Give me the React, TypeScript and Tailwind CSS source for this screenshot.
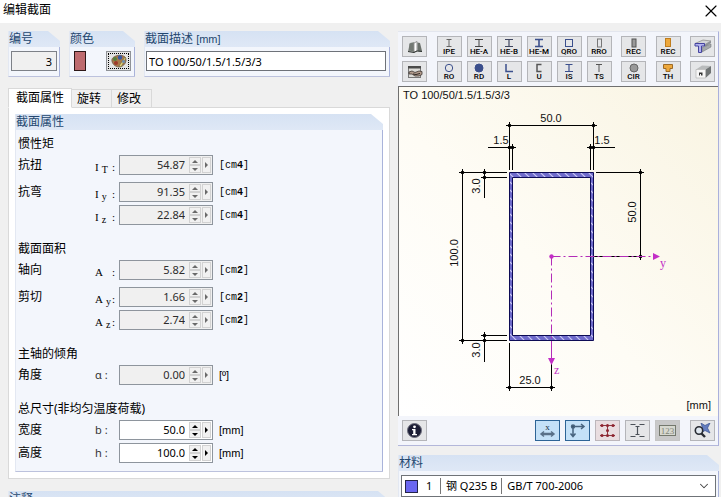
import { useState } from "react";
import type { ReactNode } from "react";
import { ChevronDown, X } from "lucide-react";
import clsx from "clsx";

const NAVY = "#3b4f8c";

function Group({ title, children, className }: { title: ReactNode; children?: ReactNode; className?: string }) {
  return (
    <section className={clsx("flex flex-col border-b border-l border-b-[#bcc2dd] border-l-[#e3e8f2]", className)}>
      <h2 className="h-4 bg-linear-to-b from-[#d6e2f3] to-[#dfe8f6] text-[12px] leading-4 text-[#24476f] [clip-path:polygon(0_0,calc(100%-12px)_0,100%_10px,100%_100%,0_100%)]">
        {title}
      </h2>
      <div className="flex-1 border-r border-[#a9b3da] bg-[#f3f6fc]">{children}</div>
    </section>
  );
}

type NumberFieldProps = { id: string; value: string; editable?: boolean };

function NumberField({ id, value, editable }: NumberFieldProps) {
  const [text, setText] = useState(value);
  const digits = value.split(".")[1].length;
  const step = (delta: number) => setText((Number(text) + delta).toFixed(digits));
  const ink = editable ? "#000000" : "#6a6a6a";
  const button = "flex items-center justify-center border border-[#d2d2d2] bg-[#f1f1f1]";

  return (
    <div className={clsx("flex h-5 w-[94px] items-center border border-[#8e959d] pr-px", editable ? "bg-white" : "bg-[#f0f0f0]")}>
      <input
        id={id}
        value={text}
        readOnly={!editable}
        onChange={(e) => setText(e.target.value)}
        className={clsx("min-w-0 flex-1 bg-transparent pr-1 text-right text-[11px] outline-none", editable ? "text-black" : "text-[#2c2c2c]")}
      />
      <div className="flex h-4 w-3 flex-col">
        <button aria-label="增加" disabled={!editable} onClick={() => step(1)} className={clsx(button, "flex-1")}>
          <svg width="6" height="3" viewBox="0 0 6 3"><path d="M0 3 3 0 6 3z" fill={ink} /></svg>
        </button>
        <button aria-label="减少" disabled={!editable} onClick={() => step(-1)} className={clsx(button, "flex-1")}>
          <svg width="6" height="3" viewBox="0 0 6 3"><path d="M0 0 3 3 6 0z" fill={ink} /></svg>
        </button>
      </div>
      <button aria-label="更多" disabled={!editable} className={clsx(button, "ml-px h-4 w-[9px]")}>
        <svg width="3" height="6" viewBox="0 0 3 6"><path d="M0 0 3 3 0 6z" fill={ink} /></svg>
      </button>
    </div>
  );
}

type Row = { label?: string; symbol: string; sub?: string; value: string; unit: string; power?: string; editable?: boolean };

const sections: { title: string; rows: Row[] }[] = [
  {
    title: "惯性矩",
    rows: [
      { label: "抗扭", symbol: "I", sub: "T", value: "54.87", unit: "cm", power: "4" },
      { label: "抗弯", symbol: "I", sub: "y", value: "91.35", unit: "cm", power: "4" },
      { symbol: "I", sub: "z", value: "22.84", unit: "cm", power: "4" },
    ],
  },
  {
    title: "截面面积",
    rows: [
      { label: "轴向", symbol: "A", value: "5.82", unit: "cm", power: "2" },
      { label: "剪切", symbol: "A", sub: "y", value: "1.66", unit: "cm", power: "2" },
      { symbol: "A", sub: "z", value: "2.74", unit: "cm", power: "2" },
    ],
  },
  { title: "主轴的倾角", rows: [{ label: "角度", symbol: "α", value: "0.00", unit: "º" }] },
  {
    title: "总尺寸(非均匀温度荷载)",
    rows: [
      { label: "宽度", symbol: "b", value: "50.0", unit: "mm", editable: true },
      { label: "高度", symbol: "h", value: "100.0", unit: "mm", editable: true },
    ],
  },
];

function PropertyRow({ row, tight }: { row: Row; tight: boolean }) {
  const id = `field-${row.symbol}${row.sub ?? ""}`;
  return (
    <div className={clsx("flex h-5 items-center", tight ? "mt-[3px]" : "mt-[7px] first-of-type:mt-px")}>
      <label htmlFor={id} className="flex w-[101px] items-center">
        <span className="w-[77px] text-[12px]">{row.label}</span>
        {row.power ? (
          <span className="flex flex-1 justify-between pt-1 pr-1 font-['Liberation_Serif',serif] text-[11px]">
            <span>
              {row.symbol}
              {row.sub && <sub className="pl-[3px] text-[10px]">{row.sub}</sub>}
            </span>
            <span>:</span>
          </span>
        ) : (
          <span className="text-[11px] text-[#333]">{row.symbol} :</span>
        )}
      </label>
      <NumberField id={id} value={row.value} editable={row.editable} />
      {row.power ? (
        <span className="pl-1.5 font-['Liberation_Mono',monospace] text-[10px]">
          [{row.unit}
          <b>{row.power}</b>]
        </span>
      ) : (
        <span className="pl-1.5 font-['Liberation_Sans',sans-serif] text-[11px]">[{row.unit}]</span>
      )}
    </div>
  );
}

function ToolButton({ label, name, tone = "plain", children }: { label?: string; name?: string; tone?: "plain" | "active" | "red" | "muted"; children: ReactNode }) {
  return (
    <button
      aria-label={label ?? name}
      className={clsx(
        "flex h-[21px] w-[25px] flex-col items-center justify-center border",
        tone === "plain" && "border-[#b4b5b9] bg-[#e5e6e8]",
        tone === "active" && "border-[#2d6496] bg-[#c4e1f8]",
        tone === "red" && "border-[#bcb6bb] bg-[#e9dde0]",
        tone === "muted" && "border-[#c5c5c5] bg-[#c9c9c9]",
      )}
    >
      {children}
      {label && <span className="font-['Roboto',sans-serif] text-[8px] leading-[8px] font-medium text-black">{label}</span>}
    </button>
  );
}

function Shape({ children }: { children: ReactNode }) {
  return (
    <svg width="16" height="10" viewBox="0 0 16 10" fill="none" stroke={NAVY} strokeWidth="1">
      {children}
    </svg>
  );
}

const profilesTop = [
  { label: "IPE", shape: <path d="M5.5 1.5h5M8 1.5v7M5.5 8.5h5" stroke="#666" /> },
  { label: "HE-A", shape: <path d="M4 1.5h8M8 1.5v7M4 8.5h8" stroke="#444" /> },
  { label: "HE-B", shape: <path d="M4 1.5h8M8 1.5v7M4 8.5h8" stroke="#3f4660" strokeWidth="1.2" /> },
  { label: "HE-M", shape: <path d="M4 1.5h8M8 1.5v7M4 8.5h8" strokeWidth="1.6" /> },
  { label: "QRO", shape: <rect x="4.5" y="1.5" width="7" height="7" /> },
  { label: "RRO", shape: <rect x="6.5" y="1" width="4" height="8" stroke="#777" /> },
];

const profilesBottom = [
  { label: "RO", shape: <circle cx="8" cy="5" r="3.7" /> },
  { label: "RD", shape: <circle cx="8" cy="5" r="4" fill={NAVY} /> },
  { label: "L", shape: <path d="M5 1v7.5h7" strokeWidth="1.5" /> },
  { label: "U", shape: <path d="M10.5 1.5H6v7h4.5" stroke="#555" strokeWidth="1.5" /> },
  { label: "IS", shape: <path d="M4.5 1.5h7M8 1.5v7M4 8.5h8" strokeWidth="1.2" /> },
  { label: "TS", shape: <path d="M5 1.5h6M8 1.5V9" stroke="#555" /> },
];

function ProfileToolbar() {
  return (
    <div className="flex justify-between py-1 pr-[3px] pl-1">
      <div className="flex flex-col gap-1">
        <ToolButton name="截面库">
          <svg width="16" height="14" viewBox="0 0 16 14">
            <path d="M1 11 3 3l4-1v10l-4-.5z" fill="#8a908b" />
            <path d="M3 3.500v7M5 3v8" stroke="#5c625d" />
            <path d="M7 12V3l3-1.500V11z" fill="#fff" stroke="#6b6b6b" strokeWidth=".7" />
            <path d="M10.500 2.500 13 3l2 8-2 .5-2.500-.5z" fill="#6a706b" />
            <path d="m1 11.500 6 1 3-1.500 5 .5" stroke="#2d322f" fill="none" />
          </svg>
        </ToolButton>
        <ToolButton name="选择截面">
          <svg width="16" height="14" viewBox="0 0 16 14">
            <rect x="1.5" y="1.5" width="12" height="11" fill="#dcdbd7" stroke="#777" />
            <path d="M1 1h13v2.500H1z" fill="#4a4a4a" />
            <path d="m2 7 3-1 3 1.500L12 6l3 .5v3l-3 1.500-4 0-3-2H2z" fill="#b39c8d" stroke="#3c3632" strokeWidth=".8" />
            <path d="m6 9 3 .5 4-1" stroke="#2a2522" fill="none" />
          </svg>
        </ToolButton>
      </div>
      <div className="flex flex-col gap-1">
        {[profilesTop, profilesBottom].map((line, i) => (
          <div key={i} className="flex gap-[5px]">
            {line.map((p) => (
              <ToolButton key={p.label} label={p.label}>
                <Shape>{p.shape}</Shape>
              </ToolButton>
            ))}
          </div>
        ))}
      </div>
      <div className="flex flex-col gap-1">
        <ToolButton label="REC">
          <Shape><rect x="6" y="1" width="4" height="8" fill="#999" stroke="#555" /></Shape>
        </ToolButton>
        <ToolButton label="CIR">
          <Shape><circle cx="8" cy="5" r="4" fill="#999" stroke="#666" /></Shape>
        </ToolButton>
      </div>
      <div className="flex flex-col gap-1">
        <ToolButton label="REC">
          <Shape><rect x="5.5" y=".5" width="5" height="8" fill="#eda83c" stroke="#c07d1d" /></Shape>
        </ToolButton>
        <ToolButton label="TH">
          <Shape><path d="M3.500 1.500h9v4H10v3H6v-3H3.500z" fill="#eda83c" stroke="#9d6a25" /></Shape>
        </ToolButton>
      </div>
      <div className="flex flex-col gap-1">
        <ToolButton name="组合截面">
          <svg width="18" height="15" viewBox="0 0 18 15">
            <path d="M1 4.500 9 1l8 1-6 3.500z" fill="#d3d5d7" stroke="#777" strokeWidth=".6" />
            <path d="m11 5.500 6-3.500v2l-6 4z" fill="#8c9197" />
            <path d="m8 8.500 9-3.500v3l-9 5z" fill="#a4a8ac" stroke="#6b6f73" strokeWidth=".5" />
            <path d="M1 4.500h9.500v2.500H7.500v6.500H4.500V7H1z" fill="#b3b3ee" stroke="#4544a0" />
          </svg>
        </ToolButton>
        <ToolButton name="自定义截面">
          <svg width="18" height="15" viewBox="0 0 18 15">
            <path d="m2 5.500 6-4 9 .5-5.500 3.500z" fill="#b9bbbc" />
            <path d="M11.500 5.500 17 2v7l-5.500 5z" fill="#707475" />
            <path d="M2 5.500h9.500V14H2z" fill="#f6f6f6" stroke="#b5b5b5" strokeWidth=".7" />
            <path d="M5 8.500h3.500v3H7V10H6v1.500H5z" fill="#333" />
          </svg>
        </ToolButton>
      </div>
    </div>
  );
}

// Dimension line end: small dot with a cross through it
function Tick({ x, y }: { x: number; y: number }) {
  return (
    <g>
      <path d={`M${x - 3.5} ${y}h7M${x} ${y - 3.5}v7`} />
      <circle cx={x} cy={y} r="1.8" fill="#000" stroke="none" />
    </g>
  );
}

const ticks = [
  [110.5, 38.5], [194.5, 38.5],
  [110.5, 60.5], [113.5, 60.5], [191.5, 60.5], [194.5, 60.5],
  [63.5, 85.5], [85.5, 85.5], [85.5, 90.5],
  [63.5, 253.5], [85.5, 248.5], [85.5, 253.5],
  [110.5, 300.5], [152.5, 300.5],
  [241.5, 85.5], [241.5, 169.5],
];

function SectionDrawing() {
  return (
    <svg viewBox="0 0 319 329" className="block w-full font-['Liberation_Sans',sans-serif] text-[11px]" role="img" aria-label="截面图">
      <defs>
        <linearGradient id="paper" x1="0" y1="1" x2="1" y2="0">
          <stop offset="0" stopColor="#ffffff" />
          <stop offset="0.45" stopColor="#fefcf5" />
          <stop offset="1" stopColor="#f9f4e2" />
        </linearGradient>
        <pattern id="hatch" width="8" height="8" patternUnits="userSpaceOnUse">
          <rect width="8" height="8" fill="#6f6bcb" />
          <path d="m-1-1 10 10M-1 7l2 2M7-1l2 2" stroke="#c9c8f4" strokeWidth="1.2" />
        </pattern>
      </defs>
      <rect width="319" height="329" fill="url(#paper)" />

      <path d="M110.500 85.500h84v168h-84zM113.500 90.500v158h78v-158z" fill="url(#hatch)" fillRule="evenodd" stroke="#0d0b55" />

      <g stroke="#000" fill="none">
        <path d="M110.500 38.500h84M110.500 38v45M194.500 38v45M113.500 60v23M191.500 60v23" />
        <path d="M89 60.500h26M190 60.500h26" />
        <path d="M60 85.500h48M82 90.500h26M63.500 83v173M85.500 82v29" />
        <path d="M60 253.500h48M82 248.500h26M85.500 246v29" />
        <path d="M110.500 256v47M152.500 256v47M110.500 300.500h42" />
        <path d="M197 85.500h47M195 169.500h49M241.500 83v89" />
        {ticks.map(([x, y]) => (
          <Tick key={`${x}-${y}`} x={x} y={y} />
        ))}
      </g>

      <g stroke="#b32db8" fill="none">
        <path d="M152.500 169.500H255" strokeDasharray="9 3 2 3" />
        <path d="M152.500 169.500V254" strokeDasharray="9 3 2 3" />
        <path d="M152.500 254v18" />
      </g>
      <g fill="#c32fc6">
        <circle cx="152.500" cy="169.500" r="2.2" />
        <path d="M254 166l7 3.500-7 3.500zM149 271h7l-3.500 7z" />
        <g className="font-['Liberation_Serif',serif] text-[12px]">
          <text x="261" y="180">y</text>
          <text x="155" y="287">z</text>
        </g>
      </g>

      <g fill="#111">
        <text x="4" y="12">TO 100/50/1.5/1.5/3/3</text>
        <text x="312" y="322" textAnchor="end">[mm]</text>
        <g textAnchor="middle">
          <text x="152" y="35">50.0</text>
          <text x="102" y="57">1.5</text>
          <text x="203" y="57">1.5</text>
          <text x="131" y="297">25.0</text>
          <text transform="translate(81 99) rotate(-90)">3.0</text>
          <text transform="translate(59 166) rotate(-90)">100.0</text>
          <text transform="translate(81 263) rotate(-90)">3.0</text>
          <text transform="translate(237 125) rotate(-90)">50.0</text>
        </g>
      </g>
    </svg>
  );
}

function ViewToolbar() {
  return (
    <div className="flex justify-between py-1 pr-[3px] pl-1">
      <ToolButton name="信息">
        <svg width="15" height="15" viewBox="0 0 15 15">
          <circle cx="7.500" cy="7.500" r="7" fill="#1b1d35" stroke="#6d6e7c" />
          <circle cx="7.500" cy="3.800" r="1.400" fill="#fff" />
          <path d="M5 6h3.500v5H10v1.300H5V11h1.200V7.300H5z" fill="#fff" />
        </svg>
      </ToolButton>
      <div className="flex gap-2.5">
        <div className="flex gap-[5px]">
          <ToolButton name="尺寸" tone="active">
            <svg width="17" height="15" viewBox="0 0 17 15" fill="none" stroke="#5a7189">
              <text x="8.500" y="7" fontSize="9" textAnchor="middle" fill="#1c2f45" stroke="none" className="font-['Liberation_Serif',serif]">x</text>
              <path d="M3 11h11" strokeWidth="2.500" />
              <path d="m5 8.500-3 2.500 3 2.500M12 8.500l3 2.500-3 2.500" strokeWidth="1.500" />
            </svg>
          </ToolButton>
          <ToolButton name="坐标轴" tone="active">
            <svg width="17" height="15" viewBox="0 0 17 15" fill="none" stroke="#47637e" strokeWidth="1.500">
              <path d="M4 13V3.500h11M1.500 10.500 4 13.500l2.500-3M12 1l3 2.500L12 6" />
              <circle cx="4" cy="3.500" r="1.500" fill="#344e67" />
            </svg>
          </ToolButton>
          <ToolButton name="应力点" tone="red">
            <svg width="17" height="15" viewBox="0 0 17 15" fill="none" stroke="#8d3840">
              <path d="M1 2.500h15M1 12.500h15M8.500 2.500v10" />
              <g fill="#8f2430" stroke="none">
                <circle cx="3" cy="2.500" r="1.500" /><circle cx="8.500" cy="2.500" r="1.500" /><circle cx="14" cy="2.500" r="1.500" />
                <circle cx="8.500" cy="7.500" r="1.500" />
                <circle cx="3" cy="12.500" r="1.500" /><circle cx="8.500" cy="12.500" r="1.500" /><circle cx="14" cy="12.500" r="1.500" />
              </g>
            </svg>
          </ToolButton>
          <ToolButton name="截面部分">
            <svg width="17" height="15" viewBox="0 0 17 15" fill="none" stroke="#4b5158" strokeWidth="1.200">
              <path d="M1.500 1.500h5M10.500 1.500h5M1.500 13.500h5M10.500 13.500h5M8.500 3.500v8M6.500 3.500h4M6.500 11.500h4" />
            </svg>
          </ToolButton>
          <ToolButton name="编号" tone="muted">
            <svg width="17" height="11" viewBox="0 0 17 11">
              <rect x=".5" y=".5" width="16" height="10" fill="#d7d8cf" stroke="#74786d" />
              <text x="8.500" y="9" fontSize="9" textAnchor="middle" fill="#80847a" className="font-['Liberation_Serif',serif]">123</text>
            </svg>
          </ToolButton>
        </div>
        <ToolButton name="显示全部">
          <svg width="17" height="15" viewBox="0 0 17 15" fill="none">
            <path d="m7 0 4 2.500L16 0l-2.500 5 2.500 5-5-2.500L7 10l1.500-5z" fill="#647ec0" stroke="#35508f" strokeWidth=".7" />
            <circle cx="5" cy="7.500" r="3.700" stroke="#272b32" strokeWidth="1.600" fill="#dfe7ef" />
            <path d="m7.500 10.500 3.500 3.500" stroke="#272b32" strokeWidth="2.400" />
          </svg>
        </ToolButton>
      </div>
    </div>
  );
}

const tabs = ["截面属性", "旋转", "修改"];

export default function App() {
  const [tab, setTab] = useState(tabs[0]);
  const [description, setDescription] = useState("TO 100/50/1.5/1.5/3/3");

  return (
    <div className="flex h-screen flex-col overflow-hidden bg-[#f0f0f0] font-['Noto_Sans','Noto_Sans_CJK_SC',sans-serif] text-[12px] text-black">
      <header className="flex h-[23px] shrink-0 items-center justify-between bg-white pl-[3px]">
        <h1 className="pb-1 leading-4">编辑截面</h1>
        <button aria-label="关闭" className="pb-0.5">
          <X size={20} strokeWidth={1.4} />
        </button>
      </header>

      <main className="grid grid-cols-[382fr_321fr] gap-2 pt-2 pr-0.5 pl-2">
        <div className="min-w-0">
          <div className="flex h-[46px] gap-[9px]">
            <Group title={<label htmlFor="number">编号</label>} className="w-[52px]">
              <div className="px-0.5 pt-1">
                <input id="number" readOnly value="3" className="h-5 w-full border border-[#7d8188] bg-[#f0f0f0] pr-1 text-right text-[11px]" />
              </div>
            </Group>
            <Group title="颜色" className="w-[66px]">
              <div className="flex justify-between pt-1 pr-[3px] pl-1">
                <span className="h-5 w-3 border border-[#2c1717] bg-[#bd6a6e]" />
                <button aria-label="选择颜色" className="flex h-5 w-[25px] border border-[#8f9297] bg-[#e4e4e4] p-px">
                  <span className="flex flex-1 items-center justify-center border border-dotted border-black">
                    <svg width="16" height="14" viewBox="0 0 16 14">
                      <path d="M1 5c2-4 10-5 13-2 3 4-1 10-6 10C4 13 0 9 1 5z" fill="#a8794b" stroke="#665544" strokeWidth=".7" />
                      <circle cx="4" cy="5" r="2" fill="#54803e" />
                      <circle cx="9" cy="3.500" r="2.200" fill="#3757a0" />
                      <circle cx="5" cy="9" r="2" fill="#9e3a2b" />
                      <path d="m8 12 6-9 1 1-5 9z" fill="#e5d477" stroke="#5b5a3d" strokeWidth=".5" />
                      <circle cx="12.500" cy="7.500" r="1.500" fill="#6d8caf" />
                    </svg>
                  </span>
                </button>
              </div>
            </Group>
            <Group
              title={
                <label htmlFor="description">
                  截面描述 <span className="font-['Liberation_Sans',sans-serif] text-[11px]">[mm]</span>
                </label>
              }
              className="min-w-0 flex-1"
            >
              <div className="px-[3px] pt-1 pl-px">
                <input
                  id="description"
                  value={description}
                  onChange={(e) => setDescription(e.target.value)}
                  className="h-5 w-full border border-[#6e7279] bg-white px-0.5 text-[11px]"
                />
              </div>
            </Group>
          </div>

          <div role="tablist" className="mt-2.5 flex h-5 items-end">
            {tabs.map((name) => (
              <button
                key={name}
                role="tab"
                aria-selected={tab === name}
                onClick={() => setTab(name)}
                className={clsx(
                  "border border-[#d9d9d9]",
                  tab === name ? "-mb-px h-5 border-b-white bg-white px-[7px]" : "h-[18px] border-b-0 border-l-0 bg-[#f0f0f0] pr-[10px] pl-[5px]",
                )}
              >
                {name}
              </button>
            ))}
          </div>

          <div role="tabpanel" className="border border-[#d9d9d9] bg-white p-1.5">
            <Group title="截面属性">
              <div className="px-0.5 pt-1 pb-2">
                {sections.map((section) => (
                  <section key={section.title} className="mb-3.5 last:mb-0">
                    <h3 className="h-5 leading-5">{section.title}</h3>
                    {section.rows.map((row) => (
                      <PropertyRow key={`${row.symbol}${row.sub}`} row={row} tight={!row.label || row.symbol === "h"} />
                    ))}
                  </section>
                ))}
              </div>
            </Group>
          </div>

          <Group title={<label htmlFor="comment">注释</label>} className="mt-3">
            <input id="comment" className="m-1 h-5 w-40 border border-[#7d8188] bg-white" />
          </Group>
        </div>

        <div className="min-w-0">
          <section className="border border-l-0 border-[#e3e6ee] border-r-[#aab0dc] border-b-[#b3b7da] bg-[#f3f5fb]">
            <ProfileToolbar />
            <div className="border-t border-l border-[#6f6f6f]">
              <SectionDrawing />
            </div>
            <ViewToolbar />
          </section>

          <Group title={<label htmlFor="material">材料</label>} className="mt-[9px]">
            <div className="px-0.5 pt-1 pb-1">
              <div className="flex h-[22px] items-center border border-[#6f7378] bg-white pr-1 pl-[3px] text-[11px]">
                <span className="size-[13px] border border-[#24244a] bg-[#6a66f0]" />
                <span className="w-[22px] pl-2">1</span>
                <span className="h-4 border-l border-[#777] pr-1 pl-[5px] leading-4">钢 Q235 B</span>
                <select
                  id="material"
                  className="h-4 min-w-0 flex-1 appearance-none border-l border-[#777] bg-transparent pl-[5px] text-[11px] leading-4 outline-none"
                >
                  <option>GB/T 700-2006</option>
                </select>
                <ChevronDown size={14} strokeWidth={1.8} className="text-[#444]" />
              </div>
            </div>
          </Group>
        </div>
      </main>
    </div>
  );
}
